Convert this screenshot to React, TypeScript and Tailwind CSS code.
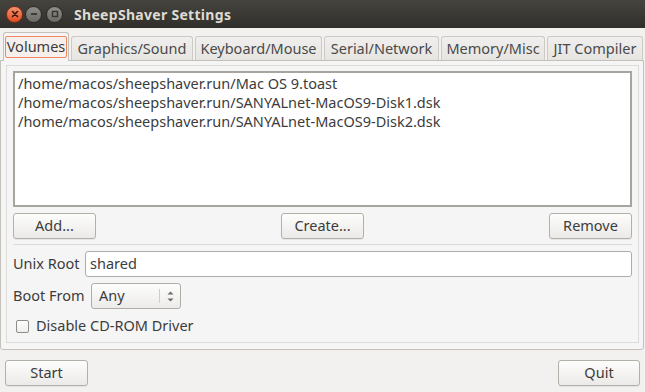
import React from "react";

const font = { fontFamily: '"Noto Sans", "DejaVu Sans", sans-serif' };

function Btn({ label, w }: { label: string; w: string }) {
  return (
    <div
      className={`${w} h-[26px] flex items-center justify-center rounded-[3px] border border-[#b3b0aa] bg-gradient-to-b from-[#fdfdfc] to-[#ebeae8] text-[14.5px] text-[#3c3c3c] shadow-[0_1px_0_rgba(0,0,0,0.06)]`}
    >
      {label}
    </div>
  );
}

function Tab({ label, w, active }: { label: string; w: string; active?: boolean }) {
  if (active) {
    return (
      <div
        className={`${w} h-[29px] -mb-px relative z-10 flex items-center justify-center rounded-t-[3px] border border-b-0 border-[#c4c1bb] bg-[#f5f5f5] px-[1px]`}
      >
        <div className="w-full h-[22px] flex items-center justify-center rounded-[2px] border border-[#f0875e] bg-[#f7efeb] text-[14.5px] text-[#3c3c3c]">
          {label}
        </div>
      </div>
    );
  }
  return (
    <div
      className={`${w} h-[24px] flex items-center justify-center rounded-t-[3px] border border-b-0 border-[#cdcac4] bg-gradient-to-b from-[#f0efed] to-[#e6e5e2] text-[14.5px] text-[#4a4a4a]`}
    >
      {label}
    </div>
  );
}

export default function App() {
  return (
    <div className="w-[645px] h-[392px] bg-[#f2f1f0] flex flex-col overflow-hidden text-[#3c3c3c]" style={font}>
      {/* title bar */}
      <div className="h-[28px] shrink-0 flex items-center bg-gradient-to-b from-[#45443f] to-[#302f2b] relative">
        <div className="flex items-center ml-[6px]">
          <div className="w-[17px] h-[17px] rounded-full bg-gradient-to-b from-[#f5926b] to-[#df4a1c] border border-[#7a2d14] flex items-center justify-center">
            <svg width="8" height="8" viewBox="0 0 8 8">
              <path d="M1.5 1.5 L6.5 6.5 M6.5 1.5 L1.5 6.5" stroke="#3a1208" strokeWidth="1.6" strokeLinecap="round" />
            </svg>
          </div>
          <div className="ml-[2px] w-[17px] h-[17px] rounded-full bg-gradient-to-b from-[#8f8e89] to-[#6b6a65] border border-[#2a2926] flex items-center justify-center">
            <svg width="8" height="8" viewBox="0 0 8 8">
              <path d="M1 4 L7 4" stroke="#36352f" strokeWidth="1.8" />
            </svg>
          </div>
          <div className="ml-[4px] w-[17px] h-[17px] rounded-full bg-gradient-to-b from-[#8f8e89] to-[#6b6a65] border border-[#2a2926] flex items-center justify-center">
            <svg width="8" height="8" viewBox="0 0 8 8">
              <rect x="1.5" y="1.5" width="5" height="5" fill="none" stroke="#36352f" strokeWidth="1.4" />
            </svg>
          </div>
        </div>
        <div className="ml-[11px] text-[14px] font-bold text-[#dfdbd2] tracking-[0.3px]">
          SheepShaver Settings
        </div>
      </div>

      {/* notebook */}
      <div className="flex flex-col pt-[4px] pr-[1px]">
        <div className="flex items-end h-[28px] pl-[3px] gap-[2px]">
          <Tab label="Volumes" w="w-[66px]" active />
          <Tab label="Graphics/Sound" w="w-[122px]" />
          <Tab label="Keyboard/Mouse" w="w-[127px]" />
          <Tab label="Serial/Network" w="w-[115px]" />
          <Tab label="Memory/Misc" w="w-[104px]" />
          <Tab label="JIT Compiler" w="w-[96px]" />
        </div>
        <div className="h-[290px] border border-[#c4c1bb] rounded-b-[3px] bg-[#f5f5f5] pt-[4px] pl-[5px] pr-[4px] pb-[6px]">
          <div className="h-full border border-[#dedcd8] flex flex-col px-[6px] pt-[5px]">
            {/* list */}
            <div className="h-[136px] border-2 border-[#a7a5a0] bg-white px-[3px] pt-[1px] text-[14.5px] leading-[19px] text-[#3c3c3c]">
              <div>/home/macos/sheepshaver.run/Mac OS 9.toast</div>
              <div>/home/macos/sheepshaver.run/SANYALnet-MacOS9-Disk1.dsk</div>
              <div>/home/macos/sheepshaver.run/SANYALnet-MacOS9-Disk2.dsk</div>
            </div>
            {/* buttons */}
            <div className="flex justify-between items-center mt-[6px]">
              <Btn label="Add..." w="w-[83px]" />
              <Btn label="Create..." w="w-[83px]" />
              <Btn label="Remove" w="w-[83px]" />
            </div>
            <div className="h-px bg-[#dcdad6] mt-[5px]" />
            {/* unix root */}
            <div className="flex items-center mt-[6px] h-[26px]">
              <div className="text-[14.5px] w-[72px]">Unix Root</div>
              <div className="flex-1 h-[26px] border border-[#b0ada8] rounded-[3px] bg-white flex items-center px-[4px] text-[14.5px]">
                shared
              </div>
            </div>
            {/* boot from */}
            <div className="flex items-center mt-[6px] h-[26px]">
              <div className="text-[14.5px] w-[78px]">Boot From</div>
              <div className="w-[90px] h-[26px] border border-[#b0ada8] rounded-[3px] bg-gradient-to-b from-[#fdfdfc] to-[#ecebe9] flex items-center text-[14.5px]">
                <div className="flex-1 pl-[7px]">Any</div>
                <div className="w-px h-[14px] bg-[#cfcdc9]" />
                <div className="w-[20px] flex flex-col items-center justify-center gap-[3px]">
                  <svg width="7" height="4" viewBox="0 0 7 4"><path d="M0.5 3.5 L3.5 0.5 L6.5 3.5 Z" fill="#6a6a6a" /></svg>
                  <svg width="7" height="4" viewBox="0 0 7 4"><path d="M0.5 0.5 L3.5 3.5 L6.5 0.5 Z" fill="#6a6a6a" /></svg>
                </div>
              </div>
            </div>
            {/* checkbox */}
            <div className="flex items-center mt-[9px] h-[16px]">
              <div className="ml-[3px] w-[13px] h-[13px] border border-[#8f8d89] rounded-[2px] bg-gradient-to-b from-white to-[#eeeeec]" />
              <div className="ml-[7px] text-[14.5px]">Disable CD-ROM Driver</div>
            </div>
          </div>
        </div>
      </div>

      {/* bottom */}
      <div className="flex justify-between items-center px-[5px] mt-[10px]">
        <Btn label="Start" w="w-[83px]" />
        <Btn label="Quit" w="w-[82px]" />
      </div>
    </div>
  );
}
